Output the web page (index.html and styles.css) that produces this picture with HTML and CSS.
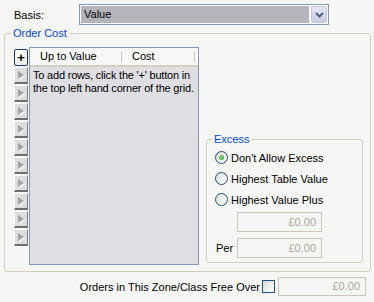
FILE: index.html
```html
<!DOCTYPE html>
<html lang="en">
<head>
  <meta charset="UTF-8" />
  <title>Order Cost</title>
  <link rel="stylesheet" href="styles.css">
</head>
<body>
  <div class="panel">
    <div class="basis">
      <span class="basis-label">Basis:</span>
      <div class="select">
        <span class="select-value">Value</span>
        <span class="select-btn">
          <svg width="9" height="6" viewBox="0 0 9 6"><path d="M1 1 L4.5 4.5 L8 1" fill="none" stroke="#4d6185" stroke-width="2"/></svg>
        </span>
      </div>
    </div>

    <!-- Order Cost group -->
    <fieldset class="group order-cost">
      <legend>Order Cost</legend>
      <div class="order-body">
        <div class="row-heads">
          <button class="add-btn">+</button>
          <span class="row-btn"></span>
          <span class="row-btn"></span>
          <span class="row-btn"></span>
          <span class="row-btn"></span>
          <span class="row-btn"></span>
          <span class="row-btn"></span>
          <span class="row-btn"></span>
          <span class="row-btn"></span>
          <span class="row-btn"></span>
          <span class="row-btn"></span>
        </div>

        <div class="grid">
          <div class="grid-head">
            <span class="col col-value">Up to Value</span>
            <span class="col col-cost">Cost</span>
          </div>
          <div class="grid-empty">To add rows, click the '+' button in<br>the top left hand corner of the grid.</div>
        </div>

        <div class="side">
          <fieldset class="group excess">
            <legend>Excess</legend>
            <label class="option"><span class="radio checked"></span>Don't Allow Excess</label>
            <label class="option"><span class="radio"></span>Highest Table Value</label>
            <label class="option"><span class="radio"></span>Highest Value Plus</label>
            <div class="field-row">
              <span class="field-label"></span>
              <span class="money">£0.00</span>
            </div>
            <div class="field-row per">
              <span class="field-label">Per</span>
              <span class="money">£0.00</span>
            </div>
          </fieldset>
        </div>
      </div>
    </fieldset>

    <div class="free-over">
      <span>Orders in This Zone/Class Free Over</span>
      <span class="check"></span>
      <span class="money wide">£0.00</span>
    </div>
  </div>
</body>
</html>
```

FILE: styles.css
```css
body {
  margin: 0;
  background: #f6f6f4;
  font-family: "Liberation Sans", Arial, sans-serif;
  font-size: 11px;
  color: #000;
}

.panel {
  width: 374px;
  height: 302px;
  overflow: hidden;
}

/* Basis row */
.basis {
  display: flex;
  align-items: center;
  height: 21px;
  padding: 4px 0 0 14px;
}

.basis-label {
  width: 65px;
}

.select {
  display: flex;
  box-sizing: border-box;
  width: 250px;
  height: 21px;
  padding: 1px;
  border: 1px solid #7f9db9;
  background: #fff;
}

.select-value {
  flex: 1;
  padding-left: 3px;
  line-height: 17px;
  background: #b4b4bd;
}

.select-btn {
  display: flex;
  align-items: center;
  justify-content: center;
  box-sizing: border-box;
  width: 16px;
  margin-left: 2px;
  border: 1px solid #c3c8e2;
  border-radius: 2px;
  background: linear-gradient(#e6e7f5, #c8cbe3);
}

/* Group boxes */
.group {
  margin: 0;
  border: 1px solid #d0d0bf;
  border-radius: 3px;
}

.group legend {
  padding: 0 2px;
  margin-left: -3px;
  line-height: 13px;
  color: #0046d5;
}

.order-cost {
  margin: 2px 4px 0;
  padding: 7px 7px 6px 9px;
}

.order-body {
  display: flex;
}

/* Row header buttons */
.row-heads {
  display: flex;
  flex-direction: column;
  width: 15px;
  padding-top: 2px;
}

.add-btn,
.row-btn {
  box-sizing: border-box;
  width: 14px;
  height: 17px;
  margin-bottom: 1px;
}

.add-btn {
  padding: 0;
  border: 1px solid #1f3d68;
  border-radius: 2px;
  background: linear-gradient(#ffffff, #ecebe6);
  font-family: "Liberation Sans", Arial, sans-serif;
  font-size: 13px;
  font-weight: bold;
  line-height: 13px;
  color: #000;
}

.row-btn {
  position: relative;
  border-top: 1px solid #fff;
  border-left: 1px solid #fff;
  border-right: 1px solid #808080;
  border-bottom: 2px solid #6f6f6f;
  background: #dedede;
}

.row-btn::before {
  content: "";
  position: absolute;
  left: 4px;
  top: 4px;
  border-left: 6px solid #fff;
  border-top: 4px solid transparent;
  border-bottom: 4px solid transparent;
}

.row-btn::after {
  content: "";
  position: absolute;
  left: 3px;
  top: 3px;
  border-left: 6px solid #a3a3a3;
  border-top: 4px solid transparent;
  border-bottom: 4px solid transparent;
}

/* Grid */
.grid {
  box-sizing: border-box;
  width: 170px;
  height: 218px;
  border: 1px solid #7f9db9;
  background: #dfdfe3;
}

.grid-head {
  display: flex;
  height: 17px;
  border-bottom: 2px solid #d3d0c2;
  background: #f8f8f6;
}

.col {
  box-sizing: border-box;
  margin: 3px 0;
  border-right: 1px solid #c9c6b8;
  line-height: 11px;
}

.col-value {
  width: 92px;
  padding-left: 10px;
}

.col-cost {
  width: 73px;
  padding-left: 10px;
}

.grid-empty {
  padding: 2px 0 0 3px;
  line-height: 13px;
  letter-spacing: -0.2px;
  white-space: nowrap;
}

/* Excess */
.side {
  display: flex;
  flex-direction: column;
  justify-content: flex-end;
  padding: 0 0 2px 7px;
}

.excess {
  box-sizing: border-box;
  width: 157px;
  padding: 1px 8px 4px 8px;
}

.option {
  display: flex;
  align-items: center;
  height: 21px;
}

.radio {
  position: relative;
  box-sizing: border-box;
  width: 13px;
  height: 13px;
  margin-right: 3px;
  border: 1px solid #1c5180;
  border-radius: 50%;
  background: linear-gradient(135deg, #dcdcd5, #ffffff);
}

.radio.checked::after {
  content: "";
  position: absolute;
  left: 3px;
  top: 3px;
  width: 5px;
  height: 5px;
  border-radius: 50%;
  background: radial-gradient(circle at 40% 40%, #7ee07e, #21a121);
}

.field-row {
  display: flex;
  align-items: center;
  margin-top: 2px;
}

.field-row.per {
  margin-top: 6px;
}

.field-label {
  width: 21px;
  padding-left: 1px;
}

.money {
  box-sizing: border-box;
  width: 85px;
  height: 20px;
  padding-right: 5px;
  border: 1px solid #c9c7ba;
  line-height: 18px;
  text-align: right;
  color: #aca899;
}

/* Bottom row */
.free-over {
  display: flex;
  align-items: center;
  justify-content: flex-end;
  margin-top: 5px;
  padding-right: 8px;
}

.check {
  box-sizing: border-box;
  width: 13px;
  height: 13px;
  margin: 0 3px 0 2px;
  border: 1px solid #1c5180;
  background: linear-gradient(135deg, #dcdcd5, #ffffff);
}

.money.wide {
  width: 88px;
  height: 19px;
  line-height: 17px;
}
```
